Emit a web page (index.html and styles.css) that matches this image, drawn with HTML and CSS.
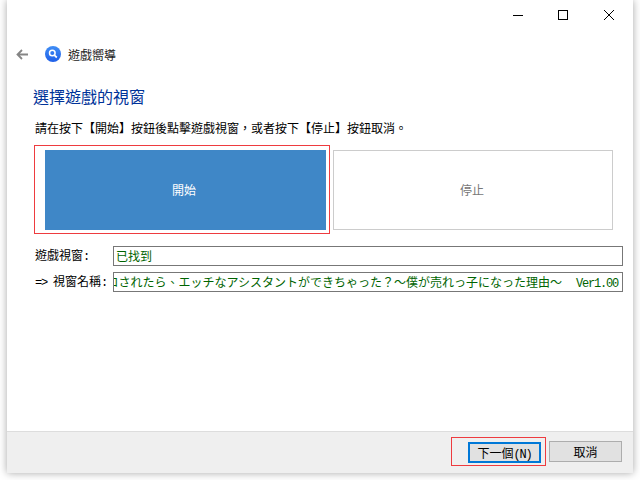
FILE: index.html
```html
<!DOCTYPE html>
<html lang="zh-Hant">
<head>
<meta charset="utf-8">
<title>遊戲嚮導</title>
<link rel="stylesheet" href="styles.css">
</head>
<body>
<div class="window">
  <div class="titlebar">
    <svg class="cap" width="10" height="10" viewBox="0 0 10 10"><path d="M0 5.500h10" stroke="#000" fill="none"/></svg>
    <svg class="cap" width="10" height="10" viewBox="0 0 10 10"><rect x="0.500" y="0.500" width="9" height="9" stroke="#000" fill="none"/></svg>
    <svg class="cap cap-close" width="10" height="10" viewBox="0 0 10 10"><path d="M0 0l10 10M10 0L0 10" stroke="#000" fill="none"/></svg>
  </div>
  <div class="navbar">
    <svg class="back" width="12" height="11" viewBox="0 0 12 11"><path d="M12 5.500H1.500M6 1L1.500 5.500 6 10" stroke="#858585" stroke-width="1.800" fill="none"/></svg>
    <svg class="logo" width="16" height="16" viewBox="0 0 16 16">
      <defs><linearGradient id="g" x1="0" y1="0" x2="0" y2="1"><stop offset="0" stop-color="#3f8ef5"/><stop offset="1" stop-color="#1f5fe8"/></linearGradient></defs>
      <circle cx="8" cy="8" r="8" fill="url(#g)"/>
      <circle cx="7.300" cy="7" r="2.800" fill="none" stroke="#fff" stroke-width="1.500"/>
      <path d="M9.300 9.200l2.500 2.300" stroke="#fff" stroke-width="1.700"/>
    </svg>
    <span class="navtitle">遊戲嚮導</span>
  </div>
  <div class="content">
    <h1 class="heading">選擇遊戲的視窗</h1>
    <p class="hint">請在按下【開始】按鈕後點擊遊戲視窗&#xFF0C;或者按下【停止】按鈕取消。</p>
    <div class="actions">
      <div class="focus-box"><button class="btn-start">開始</button></div>
      <button class="btn-stop">停止</button>
    </div>
    <div class="field">
      <span class="label">遊戲視窗<span class="latin">:</span></span>
      <div class="value">已找到</div>
    </div>
    <div class="field">
      <span class="label"><span class="latin">=&gt; </span>視窗名稱<span class="latin">:</span></span>
      <div class="value value-long"><span>ロされたら、エッチなアシスタントができちゃった&#xFF1F;&#xFF5E;僕が売れっ子になった理由&#xFF5E;<span class="latin version">  Ver1.00</span></span></div>
    </div>
  </div>
  <div class="footer">
    <div class="next-focus"><button class="btn btn-next">下一個<span class="latin">(N)</span></button></div>
    <button class="btn btn-cancel">取消</button>
  </div>
</div>
</body>
</html>
```
FILE: styles.css
```css
html, body {
  margin: 0;
  height: 100%;
  background: #fff;
  overflow: hidden;
}
body {
  width: 640px;
  height: 480px;
  padding: 0 7px 7px;
  box-sizing: border-box;
  font-family: "Noto Sans CJK TC", "Liberation Mono", monospace;
  font-size: 12px;
  color: #000;
}
.latin {
  font-family: "Liberation Mono", monospace;
  font-size: 12px;
  letter-spacing: -1.2px;
  white-space: pre;
}
.version { margin-left: 2px; }
.window {
  height: 473px;
  background: #fff;
  display: flex;
  flex-direction: column;
  box-shadow: 0 0 8px rgba(0, 0, 0, 0.35);
  clip-path: inset(0 -7px -7px -7px);
}
.titlebar {
  height: 30px;
  flex: none;
  display: flex;
  justify-content: flex-end;
  align-items: center;
  gap: 35px;
  padding-right: 19px;
  box-sizing: border-box;
}
.cap { display: block; }
.cap-close { margin-left: 1px; }
.navbar {
  height: 48px;
  flex: none;
  display: flex;
  align-items: center;
  padding-left: 9px;
}
.back { margin-right: 17px; }
.logo { margin-right: 7px; }
.navtitle { font-size: 12px; color: #222; }
.content {
  flex: 1;
  padding: 0 10px 0 26px;
  display: flex;
  flex-direction: column;
}
.heading {
  margin: 6px 0 0;
  font-size: 16px;
  font-weight: normal;
  line-height: 24px;
  color: #003399;
}
.hint { margin: 12px 0 0 2px; line-height: 16px; }
.actions {
  display: flex;
  margin: 9px 0 0 1px;
  height: 89px;
  align-items: flex-start;
}
.focus-box {
  width: 296px;
  height: 89px;
  box-sizing: border-box;
  border: 1px solid #ee3b3f;
  padding: 4px 3px 3px 10px;
  display: flex;
}
.btn-start {
  flex: 1;
  border: 0;
  padding: 0 3px 2px 0;
  background: #3f87c7;
  color: #fff;
  font: inherit;
}
.btn-stop {
  width: 280px;
  height: 80px;
  margin: 5px 0 0 3px;
  padding: 0 2px 2px 0;
  border: 1px solid #ccc;
  background: #fff;
  color: #777;
  font: inherit;
}
.field {
  display: flex;
  align-items: center;
  height: 20px;
  margin-top: 6px;
}
.actions + .field { margin-top: 12px; }
.label { width: 78px; margin-left: 2px; flex: none; white-space: pre; line-height: 18px; }
.value {
  width: 510px;
  height: 20px;
  box-sizing: border-box;
  border: 1px solid #777;
  padding: 0 2px;
  color: #006400;
  line-height: 18px;
  overflow: hidden;
  display: flex;
  white-space: nowrap;
}
.value-long { justify-content: flex-end; padding: 0 4px 0 0; }
.value-long span { flex: none; }
.footer {
  height: 42px;
  flex: none;
  box-sizing: border-box;
  background: #efefef;
  border-top: 1px solid #ddd;
  display: flex;
  justify-content: flex-end;
  align-items: flex-start;
  padding: 5px 11px 0 0;
}
.next-focus {
  border: 1px solid #ee3b3f;
  padding: 4px 4px 2px 16px;
  margin-right: 3px;
  display: flex;
}
.btn {
  width: 73px;
  height: 21px;
  box-sizing: border-box;
  border: 1px solid #adadad;
  background: #e1e1e1;
  font: inherit;
  padding: 0 0 1px;
  color: #000;
}
.btn-next { border: 2px solid #0078d7; }
.btn-cancel { margin-top: 4px; }
```
